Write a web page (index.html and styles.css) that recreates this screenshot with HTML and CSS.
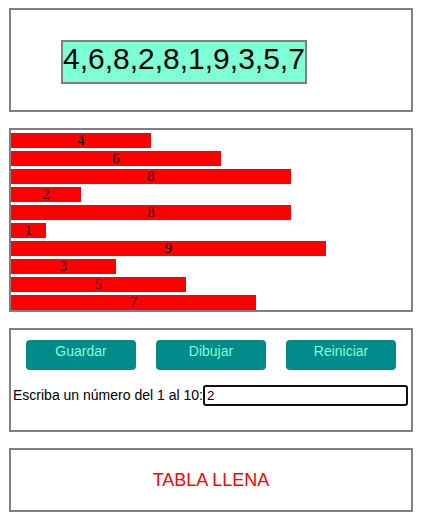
FILE: index.html
```html
<!DOCTYPE html>
<html lang="es">
<head>
<meta charset="utf-8">
<title>Tabla</title>
<link rel="stylesheet" href="styles.css">
</head>
<body>
<div class="page">
  <section class="box box-top">
    <div class="display">4,6,8,2,8,1,9,3,5,7</div>
  </section>
  <section class="box box-bars">
    <div class="bar" style="width:140px">4</div>
    <div class="bar" style="width:210px">6</div>
    <div class="bar" style="width:280px">8</div>
    <div class="bar" style="width:70px">2</div>
    <div class="bar" style="width:280px">8</div>
    <div class="bar" style="width:35px">1</div>
    <div class="bar" style="width:315px">9</div>
    <div class="bar" style="width:105px">3</div>
    <div class="bar" style="width:175px">5</div>
    <div class="bar" style="width:245px">7</div>
  </section>
  <section class="box box-controls">
    <div class="buttons">
      <button class="btn">Guardar</button>
      <button class="btn">Dibujar</button>
      <button class="btn">Reiniciar</button>
    </div>
    <div class="entry">
      <label class="entry-label" for="num">Escriba un número del 1 al 10:</label><input id="num" class="entry-input" type="text" value="2">
    </div>
  </section>
  <section class="box box-msg">
    <p class="msg">TABLA LLENA</p>
  </section>
</div>
</body>
</html>
```
FILE: styles.css
```css
* { box-sizing: border-box; }
html, body { margin: 0; padding: 0; background: #fff; }
body { font-family: "Liberation Sans", Arial, sans-serif; }
.page {
  padding: 8px 0 0 9px;
  display: flex;
  flex-direction: column;
  gap: 16px;
}
.box {
  width: 404px;
  border: 2px solid #808080;
}
.box-top {
  height: 104px;
  display: flex;
  align-items: flex-start;
  padding: 30px 0 0 50px;
}
.display {
  background: #7fffd4;
  border: 2px solid #808080;
  font-size: 30px;
  line-height: normal;
  height: 44px;
  color: #000;
}
.box-bars {
  height: 184px;
  display: flex;
  flex-direction: column;
  align-items: flex-start;
}
.bar {
  height: 15px;
  margin-top: 3px;
  background: #ff0000;
  color: #000;
  text-align: center;
  font-family: "Liberation Serif", "Times New Roman", serif;
  font-size: 14px;
  line-height: 15px;
}
.box-controls {
  height: 104px;
}
.buttons {
  display: flex;
  gap: 20px;
  padding: 10px 15px 0;
}
.btn {
  width: 110px;
  height: 30px;
  border: none;
  border-radius: 4px;
  background: #008b8b;
  color: #7fffd4;
  font-family: "Liberation Sans", Arial, sans-serif;
  font-size: 14px;
  padding: 3px 0 0;
  display: flex;
  justify-content: center;
  align-items: flex-start;
  line-height: 16px;
}
.entry {
  display: flex;
  align-items: baseline;
  padding: 15px 0 0 2px;
}
.entry-label {
  font-size: 14px;
  color: #000;
}
.entry-input {
  width: 205px;
  height: 21px;
  border: 2px solid #111;
  border-radius: 3px;
  padding: 1px 2px;
  font-family: "Liberation Sans", Arial, sans-serif;
  font-size: 13.33px;
  color: #000;
  outline: none;
}
.box-msg {
  height: 64px;
  display: flex;
  align-items: center;
  justify-content: center;
}
.msg {
  margin: 0;
  color: #ff0000;
  font-size: 18px;
}
```
